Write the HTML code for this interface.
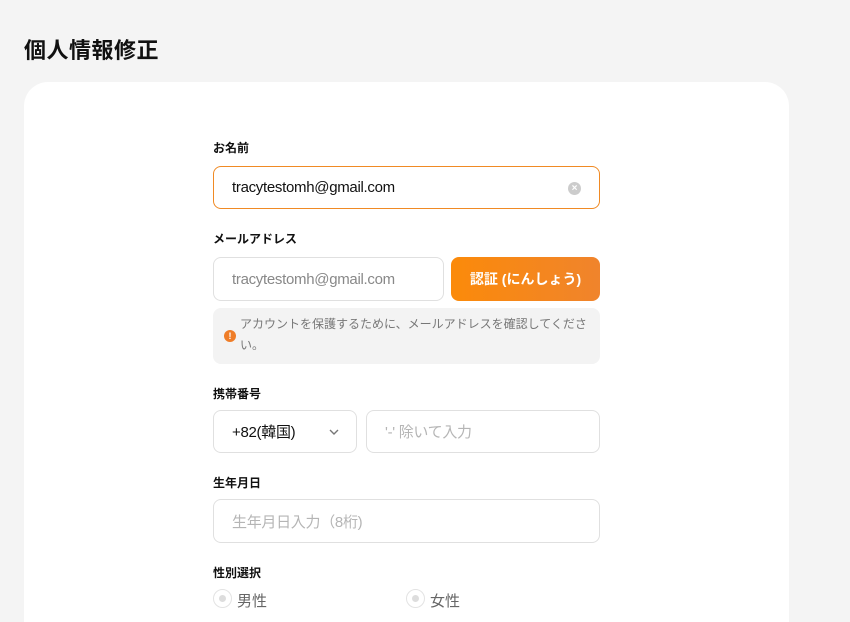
<!DOCTYPE html>
<html style="width:850px;height:622px;overflow:hidden"><head><meta charset="utf-8"><style>
*{box-sizing:border-box;margin:0;padding:0}
body{width:850px;height:622px;overflow:hidden;background:#f4f4f4;font-family:"Liberation Sans","Noto Sans CJK JP",sans-serif;position:relative;color:#111}
h1{position:absolute;left:24px;top:33px;font-size:22px;font-weight:bold;letter-spacing:0.5px}
.card{position:absolute;left:24px;top:82px;width:765px;height:540px;background:#fff;border-radius:24px 24px 0 0}
.lbl{position:absolute;left:213px;font-size:12px;font-weight:bold}
.inp{position:absolute;border:1px solid #e0e0e0;border-radius:8px;background:#fff;font-size:15px;letter-spacing:-0.3px;display:flex;align-items:center;padding-left:18px}
.ph{color:#b5b5b5}
</style></head><body>
<h1>個人情報修正</h1>
<div class="card"></div>
<div class="lbl" style="top:139px">お名前</div>
<div class="inp" style="left:213px;top:166px;width:387px;height:43px;border-color:#f08a24">tracytestomh@gmail.com
<span style="position:absolute;right:18px;top:15px;width:13px;height:13px;border-radius:50%;background:#ccc;color:#fff;font-size:10px;line-height:13px;text-align:center;font-weight:bold;letter-spacing:0">×</span></div>
<div class="lbl" style="top:230px">メールアドレス</div>
<div class="inp" style="left:213px;top:257px;width:231px;height:44px;color:#888">tracytestomh@gmail.com</div>
<div style="position:absolute;left:451px;top:257px;width:149px;height:44px;border-radius:8px;background:linear-gradient(90deg,#fb8a0a,#f0842c);color:#fff;font-weight:bold;font-size:14px;display:flex;align-items:center;justify-content:center">認証 (にんしょう)</div>
<div style="position:absolute;left:213px;top:308px;width:387px;height:56px;background:#f3f3f3;border-radius:8px;font-size:12px;color:#777;line-height:21px;padding:6px 6px 0 27px">
<span style="position:absolute;left:11px;top:22px;width:12px;height:12px;border-radius:50%;background:#ef7d28;color:#fff;font-size:9px;line-height:12px;text-align:center;font-weight:bold">!</span>
アカウントを保護するために、メールアドレスを確認してください。</div>
<div class="lbl" style="top:385px">携帯番号</div>
<div class="inp" style="left:213px;top:410px;width:144px;height:43px">+82(韓国)
<svg style="position:absolute;right:17px;top:18px" width="10" height="6" viewBox="0 0 10 6"><path d="M1 1l4 4 4-4" fill="none" stroke="#777" stroke-width="1.4"/></svg></div>
<div class="inp ph" style="left:366px;top:410px;width:234px;height:43px">'-' 除いて入力</div>
<div class="lbl" style="top:474px">生年月日</div>
<div class="inp ph" style="left:213px;top:499px;width:387px;height:44px">生年月日入力（8桁)</div>
<div class="lbl" style="top:564px">性別選択</div>
<div style="position:absolute;left:213px;top:589px;width:19px;height:19px;border:1px solid #e3e3e3;border-radius:50%"><div style="width:7px;height:7px;margin:5px;border-radius:50%;background:#ddd"></div></div>
<div style="position:absolute;left:237px;top:590px;font-size:15px;color:#666">男性</div>
<div style="position:absolute;left:406px;top:589px;width:19px;height:19px;border:1px solid #e3e3e3;border-radius:50%"><div style="width:7px;height:7px;margin:5px;border-radius:50%;background:#ddd"></div></div>
<div style="position:absolute;left:430px;top:590px;font-size:15px;color:#666">女性</div>
</body></html>
